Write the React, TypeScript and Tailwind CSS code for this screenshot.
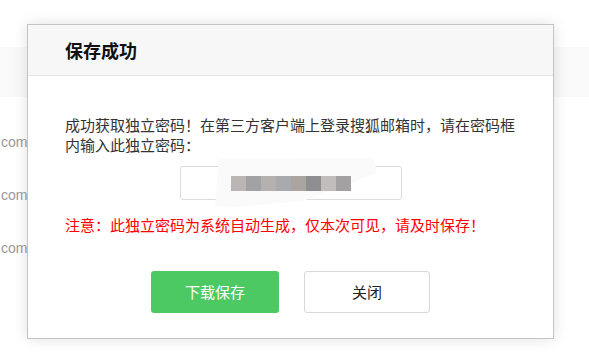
const cjk = { fontFamily: '"Microsoft YaHei", "Noto Sans CJK SC", "Noto Sans", sans-serif' };

const blurBlocks = ["#b9b6b4", "#a2a2a4", "#b4b1ae", "#a9aaae", "#aaa5a1", "#8f8f91", "#c0bdba", "#a3a1a2"];

function BackgroundPage() {
  return (
    <div className="flex flex-col">
      <div className="mt-[47px] h-[50px] bg-[#f9f9f9]" />
      <div className="mt-[35px] flex flex-col gap-[33px] text-[14px] leading-[20px] text-[#999]" style={{ fontFamily: '"Liberation Sans", Arial, sans-serif' }}>
        <div className="pl-px">com</div>
        <div className="pl-px">com</div>
        <div className="pl-px">com</div>
      </div>
    </div>
  );
}

function PasswordBox() {
  return (
    <div className="relative mx-auto mt-[11px] flex h-[34px] w-[222px] items-center rounded-[3px] border border-[#dcdcdc] bg-white">
      {/* smudge left by the blur over the password */}
      <svg className="absolute left-0 top-[-10px] overflow-visible" width="222" height="55" viewBox="0 0 222 55">
        <polygon points="38,2 193,1 196,16 122,44 57,50 34,49" fill="#fafafa" />
      </svg>
      <div className="relative ml-[50px] flex">
        {blurBlocks.map((c, i) => (
          <div key={i} className="h-[15px] w-[15px]" style={{ backgroundColor: c }} />
        ))}
      </div>
    </div>
  );
}

export default function App() {
  return (
    <div className="relative h-[360px] w-full overflow-hidden bg-white" style={cjk}>
      <BackgroundPage />

      <div className="absolute left-[27px] top-[24px] flex w-[527px] flex-col border border-[#c4c4c4] bg-white shadow-[0_0_14px_rgba(0,0,0,0.12)]">
        <div className="flex h-[51px] items-center border-b border-[#e6e6e6] bg-[#f7f7f7] pl-[37px]">
          <h2 className="text-[18px] font-bold leading-none text-[#111]">保存成功</h2>
        </div>

        <div className="flex flex-col px-[37px] pb-[25px] pt-[39px]">
          <p className="text-[15px] leading-[20px] text-[#333]">
            成功获取独立密码！在第三方客户端上登录搜狐邮箱时，请在密码框内输入此独立密码：
          </p>

          <PasswordBox />

          <p className="mt-[15px] text-[15px] leading-[20px] text-[#ff0000]">
            注意：此独立密码为系统自动生成，仅本次可见，请及时保存！
          </p>

          <div className="mt-[36px] flex justify-center gap-[25px]">
            <button className="h-[42px] w-[128px] rounded-[3px] bg-[#4cc962] text-[15px] text-white">
              下载保存
            </button>
            <button className="h-[42px] w-[126px] rounded-[3px] border border-[#d9d9d9] bg-white text-[15px] text-[#222]">
              关闭
            </button>
          </div>
        </div>
      </div>
    </div>
  );
}
